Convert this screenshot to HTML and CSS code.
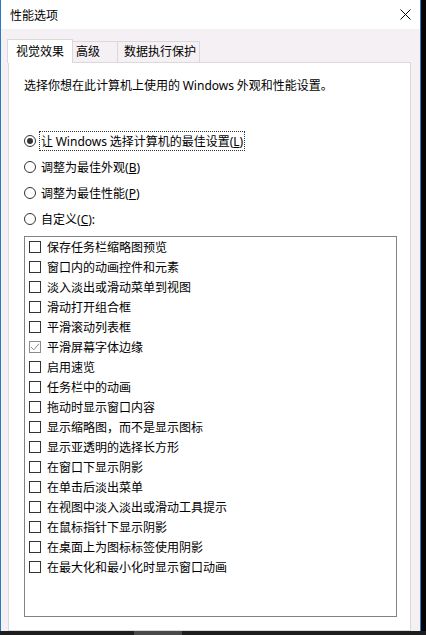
FILE: index.html
```html
<!DOCTYPE html>
<html lang="zh-CN">
<head>
<meta charset="utf-8">
<title>性能选项</title>
<link rel="stylesheet" href="styles.css">
</head>
<body>
<div class="screen">
  <div class="window">
    <div class="titlebar">
      <span class="title">性能选项</span>
      <svg class="close" width="11" height="11" viewBox="0 0 11 11"><path d="M0.5 0.5 L10.5 10.5 M10.5 0.5 L0.5 10.5" stroke="#000" stroke-width="1" fill="none"/></svg>
    </div>
    <div class="body">
      <div class="tabs">
        <div class="tab active">视觉效果</div>
        <div class="tab t2">高级</div>
        <div class="tab t3">数据执行保护</div>
      </div>
      <div class="panel">
        <p class="desc">选择你想在此计算机上使用的 <span class="lat">Windows</span> 外观和性能设置。</p>
        <div class="options">
          <div class="radio-row"><span class="radio checked"></span><span class="rlabel focus">让 <span class="lat">Windows</span> 选择计算机的最佳设置<span class="lat">(<u>L</u>)</span></span></div>
          <div class="radio-row"><span class="radio"></span><span class="rlabel">调整为最佳外观<span class="lat">(<u>B</u>)</span></span></div>
          <div class="radio-row"><span class="radio"></span><span class="rlabel">调整为最佳性能<span class="lat">(<u>P</u>)</span></span></div>
          <div class="radio-row"><span class="radio"></span><span class="rlabel">自定义<span class="lat">(<u>C</u>):</span></span></div>
          <div class="listbox">
            <div class="item"><span class="cb"></span><span>保存任务栏缩略图预览</span></div>
            <div class="item"><span class="cb"></span><span>窗口内的动画控件和元素</span></div>
            <div class="item"><span class="cb"></span><span>淡入淡出或滑动菜单到视图</span></div>
            <div class="item"><span class="cb"></span><span>滑动打开组合框</span></div>
            <div class="item"><span class="cb"></span><span>平滑滚动列表框</span></div>
            <div class="item"><span class="cb checked"><svg width="10" height="10" viewBox="0 0 10 10"><path d="M1 5 L3.8 7.8 L9 1.8" stroke="#8a8a8a" stroke-width="1" fill="none"/></svg></span><span>平滑屏幕字体边缘</span></div>
            <div class="item"><span class="cb"></span><span>启用速览</span></div>
            <div class="item"><span class="cb"></span><span>任务栏中的动画</span></div>
            <div class="item"><span class="cb"></span><span>拖动时显示窗口内容</span></div>
            <div class="item"><span class="cb"></span><span>显示缩略图，而不是显示图标</span></div>
            <div class="item"><span class="cb"></span><span>显示亚透明的选择长方形</span></div>
            <div class="item"><span class="cb"></span><span>在窗口下显示阴影</span></div>
            <div class="item"><span class="cb"></span><span>在单击后淡出菜单</span></div>
            <div class="item"><span class="cb"></span><span>在视图中淡入淡出或滑动工具提示</span></div>
            <div class="item"><span class="cb"></span><span>在鼠标指针下显示阴影</span></div>
            <div class="item"><span class="cb"></span><span>在桌面上为图标标签使用阴影</span></div>
            <div class="item"><span class="cb"></span><span>在最大化和最小化时显示窗口动画</span></div>
          </div>
        </div>
      </div>
    </div>
  </div>
  <div class="desk"></div>
</div>
<div class="taskbar"><div class="tb-gap"></div><div class="tb-seg"></div></div>
</body>
</html>
```

FILE: styles.css
```css
* { box-sizing: border-box; margin: 0; padding: 0; }
html, body { width: 426px; height: 635px; overflow: hidden; }
body {
  font-family: "Noto Sans CJK SC", "Noto Sans", sans-serif;
  font-size: 12px;
  line-height: 16px;
  color: #000;
  background: #1e1e1e;
}
.lat { font-family: "Noto Sans", "Noto Sans CJK SC", sans-serif; }
u { text-decoration: underline; text-underline-offset: 1px; }

.screen { display: flex; height: 631px; }
.window {
  width: 421px;
  display: flex;
  flex-direction: column;
  border-left: 1px solid #2b78c5;
  border-right: 1px solid #2b78c5;
  background: #f4f0f4;
  overflow: hidden;
}
.desk { flex: 1; background: #050505; }

.titlebar {
  height: 29px;
  flex: none;
  background: #fff;
  display: flex;
  align-items: center;
  justify-content: space-between;
  padding: 0 9px 0 9px;
}
.title { padding-top: 1px; }
.close { display: block; }

.body {
  flex: 1;
  display: flex;
  flex-direction: column;
  padding: 10px 9px 0 7px;
  min-height: 0;
}
.tabs {
  display: flex;
  align-items: flex-end;
  height: 23px;
  margin-left: -1px;
  flex: none;
}
.tab {
  height: 21px;
  border-top: 1px solid #d9d9d9;
  border-right: 1px solid #d9d9d9;
  background: #f4f0f4;
  padding-top: 1px;
  white-space: nowrap;
}
.tab.active {
  width: 66px;
  height: 24px;
  border-left: 1px solid #d9d9d9;
  margin-bottom: -1px;
  background: #fff;
  position: relative;
  z-index: 1;
  text-align: center;
  padding-top: 3px;
}
.t2 { width: 45px; padding-left: 3px; }
.t3 { width: 82px; padding-left: 6px; }

.panel {
  flex: 1;
  background: #fff;
  border: 1px solid #d9d9d9;
  padding: 14px 13px 0 15px;
}
.desc { height: 16px; white-space: nowrap; }

.options {
  margin-top: 38px;
  display: flex;
  flex-direction: column;
  gap: 6px;
}
.radio-row {
  display: flex;
  align-items: center;
  height: 20px;
  gap: 3px;
}
.radio {
  flex: none;
  width: 12px;
  height: 12px;
  border: 1px solid #333;
  border-radius: 50%;
  background: #fff;
  display: grid;
  place-items: center;
}
.radio.checked::after {
  content: "";
  width: 6px;
  height: 6px;
  border-radius: 50%;
  background: #333;
}
.rlabel {
  height: 20px;
  line-height: 18px;
  border: 1px dotted transparent;
  padding: 0 1px;
  white-space: nowrap;
}
.rlabel.focus { border-color: #333; }

.listbox {
  margin-top: 1px;
  height: 381px;
  border: 1px solid #828282;
  background: #fff;
  padding: 0 0 0 4px;
  display: flex;
  flex-direction: column;
}
.item {
  height: 20px;
  line-height: 20px;
  display: flex;
  align-items: center;
  gap: 6px;
  white-space: nowrap;
}
.cb {
  flex: none;
  width: 12px;
  height: 12px;
  border: 1px solid #333;
  background: #fff;
  display: grid;
  place-items: center;
}
.cb.checked { border-color: #8a8a8a; }
.cb svg { display: block; }

.taskbar { display: flex; height: 4px; background: #1e1e1e; }
.tb-gap { width: 134px; }
.tb-seg { width: 48px; background: #4a4a4a; }
```
